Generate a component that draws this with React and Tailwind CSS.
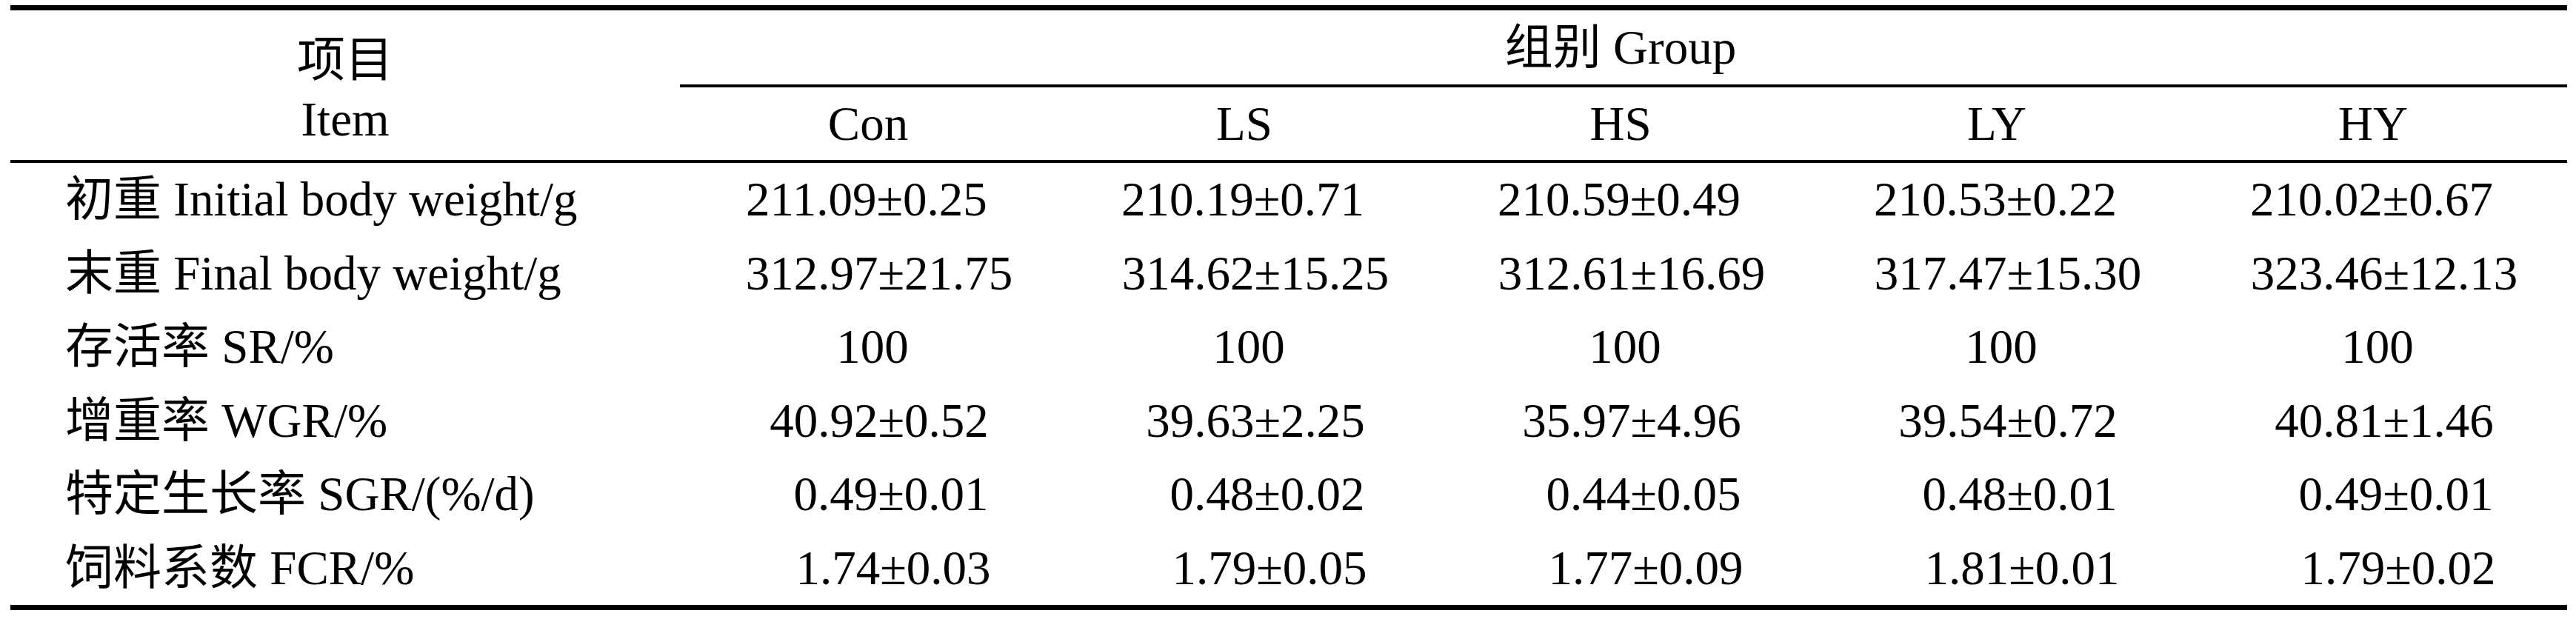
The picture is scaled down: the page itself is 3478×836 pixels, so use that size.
const groups = ["Con", "LS", "HS", "LY", "HY"];

const rows = [
  { label: "初重 Initial body weight/g", pad: "pr-[4px]", values: ["211.09±0.25", "210.19±0.71", "210.59±0.49", "210.53±0.22", "210.02±0.67"] },
  { label: "末重 Final body weight/g", pad: "pl-[30px]", values: ["312.97±21.75", "314.62±15.25", "312.61±16.69", "317.47±15.30", "323.46±12.13"] },
  { label: "存活率 SR/%", pad: "pl-[12px]", values: ["100", "100", "100", "100", "100"] },
  { label: "增重率 WGR/%", pad: "pl-[30px]", values: ["40.92±0.52", "39.63±2.25", "35.97±4.96", "39.54±0.72", "40.81±1.46"] },
  { label: "特定生长率 SGR/(%/d)", pad: "pl-[62px]", values: ["0.49±0.01", "0.48±0.02", "0.44±0.05", "0.48±0.01", "0.49±0.01"] },
  { label: "饲料系数 FCR/%", pad: "pl-[68px]", values: ["1.74±0.03", "1.79±0.05", "1.77±0.09", "1.81±0.01", "1.79±0.02"] },
];

const App = () => {
  return (
    <div className="min-h-screen bg-white pt-[7px] pl-[14px] text-black text-[65px] font-['Liberation_Serif','Noto_Sans_CJK_SC',serif]">
      <div className="w-[3452px] border-t-[7px] border-b-[7px] border-black">

        {/* Header */}
        <div className="grid grid-cols-[904px_repeat(5,508px)_8px] border-b-[4px] border-black">
          <div className="row-span-2 pt-[27px] text-center leading-[80px]">
            <div>项目</div>
            <div>Item</div>
          </div>
          <div className="col-span-6 h-[104px] leading-[100px] text-center border-b-[4px] border-black pr-[8px]">
            组别 Group
          </div>
          {groups.map(g => (
            <div key={g} className="h-[98px] leading-[98px] text-center">{g}</div>
          ))}
          <div />
        </div>

        {/* Body */}
        {rows.map(row => (
          <div key={row.label} className="grid grid-cols-[904px_repeat(5,508px)_8px] h-[99.5px] leading-[99.5px]">
            <div className="pl-[74px] whitespace-nowrap">{row.label}</div>
            {row.values.map((v, i) => (
              <div key={i} className={"text-center whitespace-nowrap " + row.pad}>{v}</div>
            ))}
            <div />
          </div>
        ))}
      </div>
    </div>
  );
};

export default App;
